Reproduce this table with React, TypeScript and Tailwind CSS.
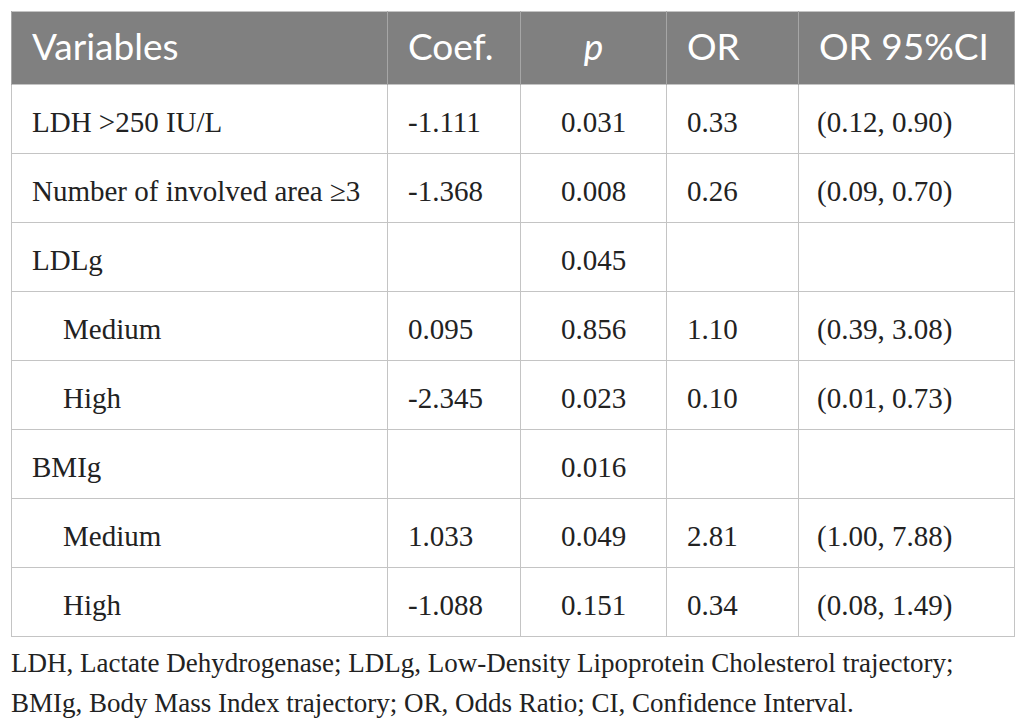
import React from 'react';

type Row = { label: string; indent?: boolean; coef: string; p: string; or: string; ci: string };

const rows: Row[] = [
  { label: 'LDH >250 IU/L', coef: '-1.111', p: '0.031', or: '0.33', ci: '(0.12, 0.90)' },
  { label: 'Number of involved area ≥3', coef: '-1.368', p: '0.008', or: '0.26', ci: '(0.09, 0.70)' },
  { label: 'LDLg', coef: '', p: '0.045', or: '', ci: '' },
  { label: 'Medium', indent: true, coef: '0.095', p: '0.856', or: '1.10', ci: '(0.39, 3.08)' },
  { label: 'High', indent: true, coef: '-2.345', p: '0.023', or: '0.10', ci: '(0.01, 0.73)' },
  { label: 'BMIg', coef: '', p: '0.016', or: '', ci: '' },
  { label: 'Medium', indent: true, coef: '1.033', p: '0.049', or: '2.81', ci: '(1.00, 7.88)' },
  { label: 'High', indent: true, coef: '-1.088', p: '0.151', or: '0.34', ci: '(0.08, 1.49)' },
];

const th = 'h-[73px] px-[20px] pb-[4px] font-normal border-x border-[#a6a6a6]';
const td = 'h-[69px] px-[20px] pt-[8px] border border-[#c4c4c4]';

export default function App() {
  return (
    <div className="min-h-screen bg-white p-[11px] font-['Liberation_Serif',serif] text-[#222]">
      <table className="w-[1003px] table-fixed border-collapse border border-[#c4c4c4]">
        <colgroup>
          <col className="w-[376px]" />
          <col className="w-[133px]" />
          <col className="w-[146px]" />
          <col className="w-[132px]" />
          <col className="w-[216px]" />
        </colgroup>
        <thead>
          <tr className="bg-[#808080] text-white font-['Lato',sans-serif] text-[37px]">
            <th className={th + ' text-left'}>Variables</th>
            <th className={th + ' text-left'}>Coef.</th>
            <th className={th + ' text-center italic'}>p</th>
            <th className={th + ' text-left'}>OR</th>
            <th className={th + ' text-left'}>OR 95%CI</th>
          </tr>
        </thead>
        <tbody className="text-[29px]">
          {rows.map((r, i) => (
            <tr key={i}>
              <td className={td + (r.indent ? ' pl-[51px]' : '')}>{r.label}</td>
              <td className={td}>{r.coef}</td>
              <td className={td + ' text-center'}>{r.p}</td>
              <td className={td}>{r.or}</td>
              <td className={td + ' pl-[18px]'}>{r.ci}</td>
            </tr>
          ))}
        </tbody>
      </table>
      <p className="mt-[6px] text-[27px] leading-[40px]">
        LDH, Lactate Dehydrogenase; LDLg, Low-Density Lipoprotein Cholesterol trajectory;
        <br />
        BMIg, Body Mass Index trajectory; OR, Odds Ratio; CI, Confidence Interval.
      </p>
    </div>
  );
}
